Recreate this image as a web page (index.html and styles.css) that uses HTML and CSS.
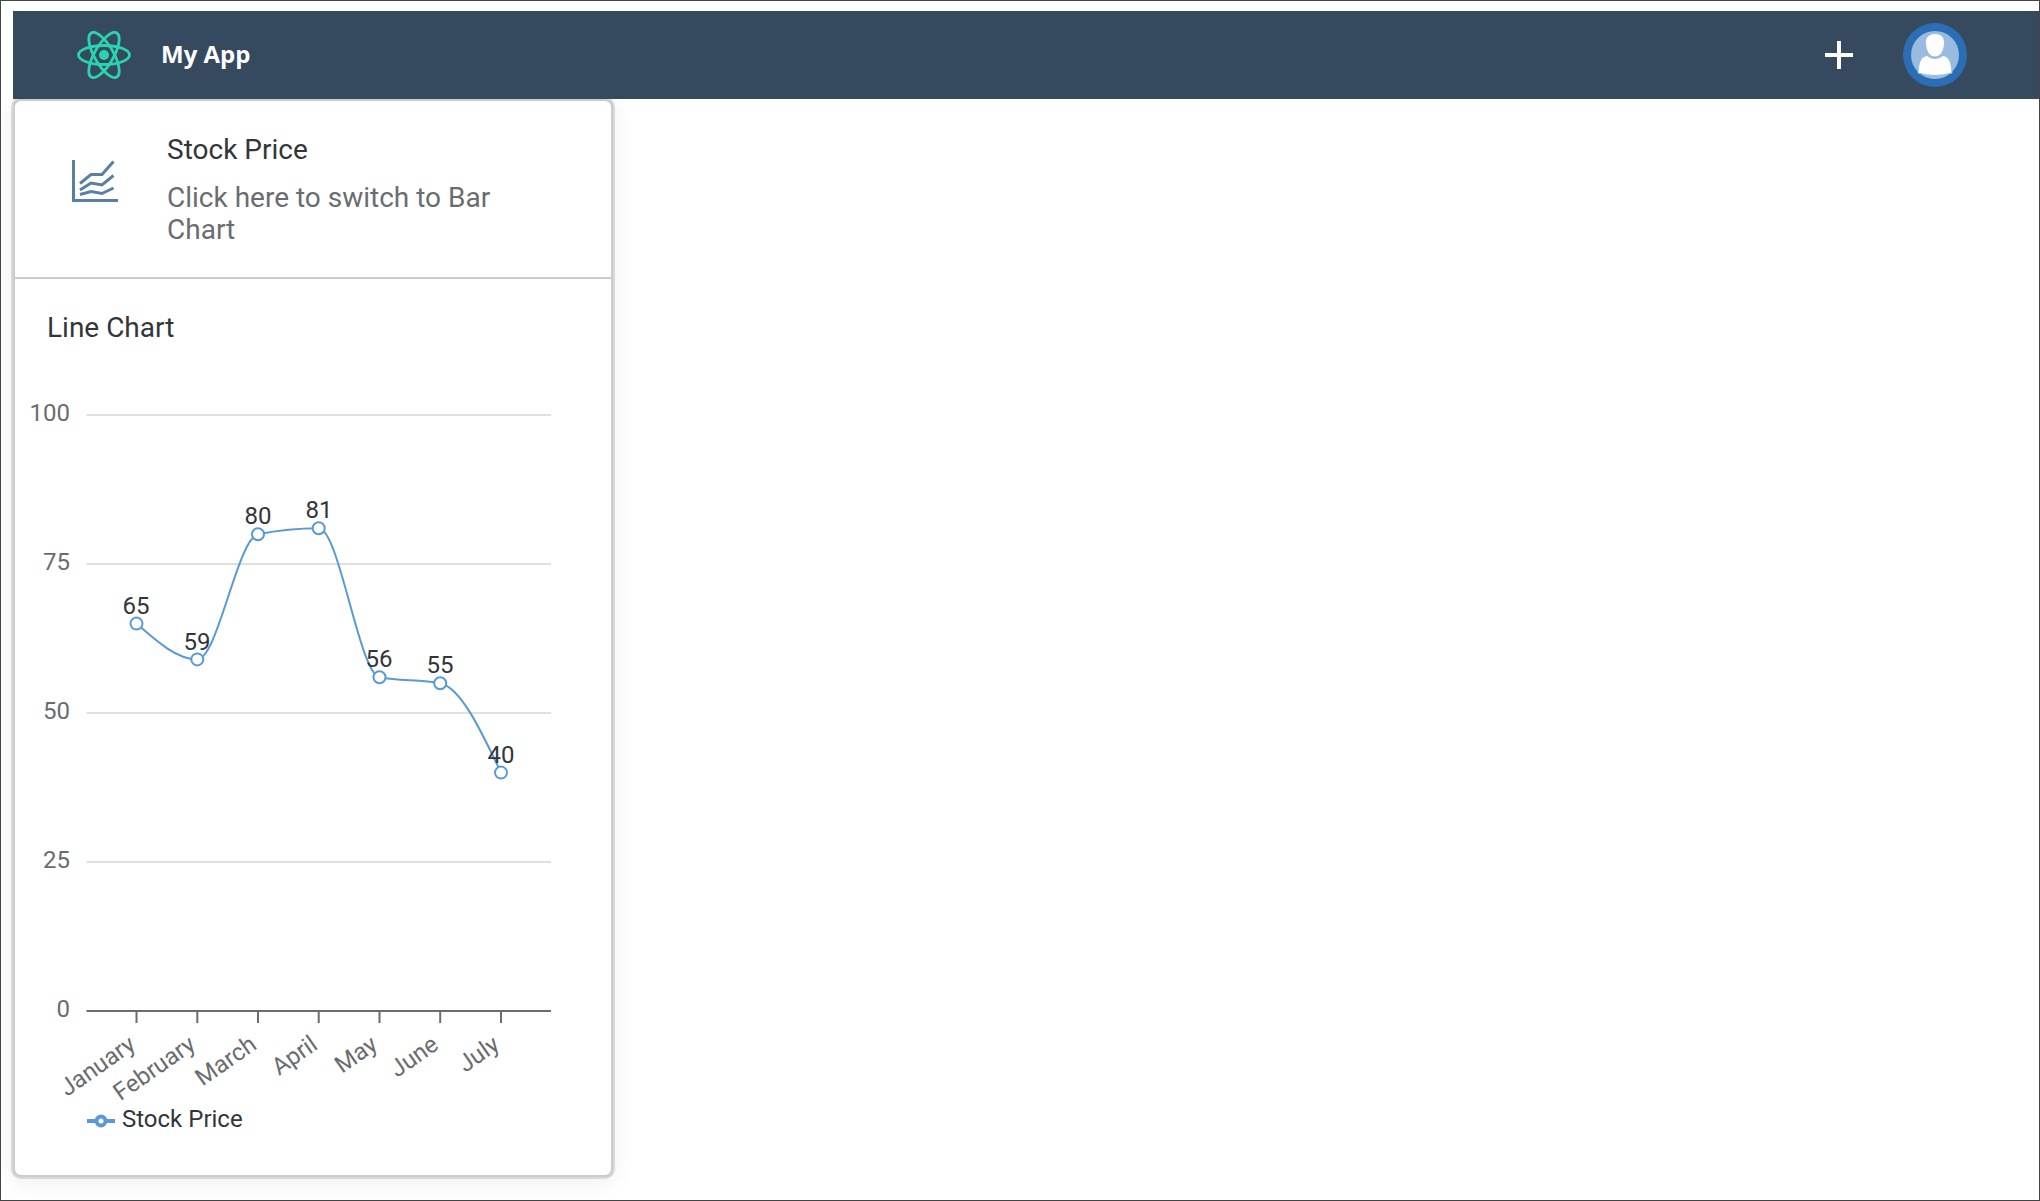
FILE: index.html
```html
<!DOCTYPE html>
<html lang="en">
<head>
<meta charset="utf-8">
<meta name="viewport" content="width=device-width, initial-scale=1">
<title>My App</title>
<link rel="stylesheet" href="styles.css">
</head>
<body>
<header class="shellbar">
  <a class="brand" href="#">
    <svg class="brand-logo" viewBox="-28 -24 56 48" aria-hidden="true">
      <circle r="5"/>
      <g class="orbits">
        <ellipse rx="25.500" ry="9.500"/>
        <ellipse rx="25.500" ry="9.500" transform="rotate(60)"/>
        <ellipse rx="25.500" ry="9.500" transform="rotate(120)"/>
      </g>
    </svg>
    <span class="brand-title">My App</span>
  </a>
  <div class="actions">
    <button class="add" type="button" aria-label="Add">
      <svg viewBox="0 0 28 28"><path d="M12 0h4v12h12v4H16v12h-4V16H0v-4h12z"/></svg>
    </button>
    <button class="profile" type="button" aria-label="Profile">
      <svg viewBox="0 0 64 64">
        <circle class="ring" cx="32" cy="32" r="32"/>
        <circle class="disc" cx="32" cy="32" r="24"/>
        <path class="person" d="M15 50C15.500 41 17 33.500 24 32.500Q32 38.500 40 32.500C47 33.500 48.500 41 49 50Q32 55 15 50z"/>
        <path class="person" d="M32 10.500C38 10.500 41.500 14 41.500 19.500C41.500 27 38 34 32 34S22.500 27 22.500 19.500C22.500 14 26 10.500 32 10.500z"/>
      </svg>
    </button>
  </div>
</header>
<main>
  <article class="card">
    <button class="card-header" type="button">
      <svg class="card-icon" viewBox="0 0 46 42" aria-hidden="true">
        <path d="M1.500 0V40.500H46"/>
        <path d="M8 23.500L19 14.500H30L41.500 1.500M8 30L19 23L30 25L41.500 15.500M8 34.500L19 31.500L30 33.500L41.500 28"/>
      </svg>
      <span class="card-text">
        <span class="card-title">Stock Price</span>
        <span class="card-subtitle">Click here to switch to Bar Chart</span>
      </span>
    </button>
    <h2 class="chart-title">Line Chart</h2>
    <svg class="chart" viewBox="0 0 596 805" role="img" aria-label="Stock Price by month">
      <path class="grid" d="M71.500 45H536M71.500 194H536M71.500 343H536M71.500 492H536"/>
      <path class="axis" d="M71.500 641H536M121.500 641v12M182.300 641v12M243 641v12M303.700 641v12M364.500 641v12M425.200 641v12M486 641v12"/>
      <g class="y-labels">
        <text x="55" y="51">100</text>
        <text x="55" y="200">75</text>
        <text x="55" y="349">50</text>
        <text x="55" y="498">25</text>
        <text x="55" y="647">0</text>
      </g>
      <g class="x-labels">
        <text transform="translate(122 678) rotate(-35)">January</text>
        <text transform="translate(182 678) rotate(-35)">February</text>
        <text transform="translate(243 678) rotate(-35)">March</text>
        <text transform="translate(304 678) rotate(-35)">April</text>
        <text transform="translate(364 678) rotate(-35)">May</text>
        <text transform="translate(425 678) rotate(-35)">June</text>
        <text transform="translate(486 678) rotate(-35)">July</text>
      </g>
      <path class="series" d="M121.500 253.600C141.800 271.500 162 289.400 182.300 289.400C202.500 289.400 222.800 168.200 243 164.200C263.200 160.200 283.500 158.200 303.700 158.200C324 158.200 344.200 303.200 364.500 307.200C384.700 311.200 405 309.200 425.200 313.200C445.500 317.200 465.700 359.900 486 402.600"/>
      <g class="dots">
        <circle cx="121.500" cy="253.600" r="6"/>
        <circle cx="182.300" cy="289.400" r="6"/>
        <circle cx="243" cy="164.200" r="6"/>
        <circle cx="303.700" cy="158.200" r="6"/>
        <circle cx="364.500" cy="307.200" r="6"/>
        <circle cx="425.200" cy="313.200" r="6"/>
        <circle cx="486" cy="402.600" r="6"/>
      </g>
      <g class="values">
        <text x="121" y="244">65</text>
        <text x="182" y="280">59</text>
        <text x="243" y="154">80</text>
        <text x="304" y="148">81</text>
        <text x="364" y="297">56</text>
        <text x="425" y="303">55</text>
        <text x="486" y="393">40</text>
      </g>
      <g class="legend">
        <path d="M72 751h9M91 751h9"/>
        <circle cx="86" cy="751" r="4.500"/>
        <text x="107" y="757">Stock Price</text>
      </g>
    </svg>
  </article>
</main>
</body>
</html>
```
FILE: styles.css
```css
* {
  box-sizing: border-box;
}

body {
  margin: 0;
  min-height: 100vh;
  padding: 10px 0 20px 12px;
  border: 1px solid #444;
  background: #fff;
  color: #32363a;
  font-family: Roboto, "Liberation Sans", sans-serif;
  font-size: 28px;
  line-height: 32px;
}

button {
  padding: 0;
  border: 0;
  background: none;
  color: inherit;
  font: inherit;
  cursor: pointer;
}

.shellbar {
  position: relative;
  z-index: 1;
  display: flex;
  align-items: center;
  justify-content: space-between;
  height: 88px;
  padding: 0 72px 0 63px;
  background: #354a5f;
}

.brand {
  display: flex;
  align-items: center;
  gap: 29px;
  color: #fff;
  text-decoration: none;
}

.brand-logo {
  width: 56px;
  height: 48px;
  fill: #2bd4b0;
}

.orbits {
  fill: none;
  stroke: #2bd4b0;
  stroke-width: 2.8;
}

.brand-title {
  padding-bottom: 2px;
  font-family: "Open Sans", sans-serif;
  font-size: 24px;
  font-weight: 700;
}

.actions {
  display: flex;
  align-items: center;
  gap: 50px;
}

.actions button,
.actions svg {
  display: block;
}

.add svg {
  width: 28px;
  height: 28px;
  fill: #fff;
}

.profile svg {
  width: 64px;
  height: 64px;
}

.ring {
  fill: #2b6eb5;
}

.disc {
  fill: #99bbdf;
}

.person {
  fill: #fff;
  stroke: #99bbdf;
  stroke-width: 1;
}

.card {
  width: 100%;
  max-width: 600px;
  border: 2px solid #ccc;
  border-radius: 8px;
  background: #fff;
  box-shadow: 0 0 0 2px #d9d9d9, 0 4px 24px rgba(0, 0, 0, 0.08);
}

.card-header {
  display: flex;
  align-items: center;
  gap: 49px;
  width: 100%;
  padding: 33px 64px 31px 57px;
  border-bottom: 2px solid #ccc;
  text-align: left;
}

.card-icon {
  flex: none;
  width: 46px;
  height: 42px;
  margin-bottom: 18px;
  fill: none;
  stroke: #5b7fa3;
  stroke-width: 3;
}

.card-text {
  display: flex;
  flex-direction: column;
  gap: 16px;
}

.card-subtitle {
  color: #6a6d70;
}

.chart-title {
  margin: 0;
  padding: 33px 32px 26px;
  font-size: 28px;
  font-weight: 400;
}

.chart {
  display: block;
  width: 100%;
  font-size: 24px;
  fill: #32363a;
}

.grid {
  stroke: #e0e0e0;
  stroke-width: 2;
}

.axis {
  fill: none;
  stroke: #6a6d70;
  stroke-width: 2;
}

.y-labels,
.x-labels {
  fill: #6a6d70;
  text-anchor: end;
}

.series {
  fill: none;
  stroke: #5899da;
  stroke-width: 2;
}

.dots {
  fill: #fff;
  stroke: #5899da;
  stroke-width: 2;
}

.values {
  text-anchor: middle;
}

.legend path,
.legend circle {
  fill: none;
  stroke: #5899da;
  stroke-width: 4;
}
```
